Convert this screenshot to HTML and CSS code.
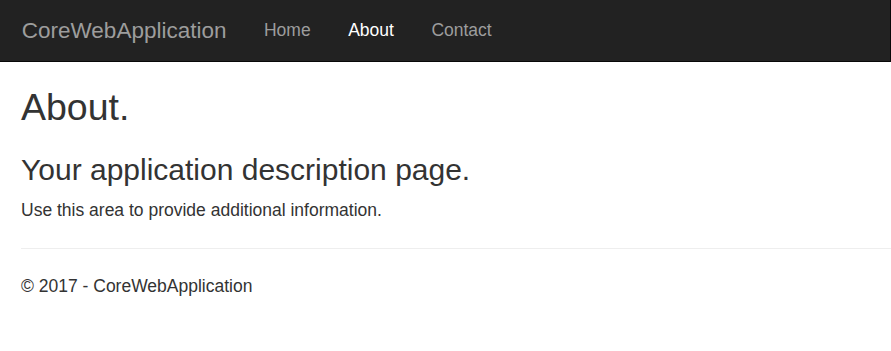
FILE: index.html
```html
<!DOCTYPE html>
<html lang="en">
<head>
<meta charset="utf-8">
<title>About - CoreWebApplication</title>
<link rel="stylesheet" href="styles.css">
</head>
<body>
<nav class="navbar">
  <a class="brand" href="#">CoreWebApplication</a>
  <ul class="nav">
    <li><a href="#">Home</a></li>
    <li><a class="active" href="#">About</a></li>
    <li><a href="#">Contact</a></li>
  </ul>
</nav>
<main class="content">
  <h2 class="title">About.</h2>
  <h3 class="subtitle">Your application description page.</h3>
  <p class="text">Use this area to provide additional information.</p>
  <hr class="rule">
  <footer class="footer">
    <p class="text">&copy; 2017 - CoreWebApplication</p>
  </footer>
</main>
</body>
</html>
```
FILE: styles.css
```css
* { box-sizing: border-box; }
html, body { margin: 0; padding: 0; }
body {
  font-family: "Liberation Sans", Arial, Helvetica, sans-serif;
  font-size: 17.5px;
  line-height: 25px;
  color: #333;
  background: #fff;
}
.navbar {
  display: flex;
  align-items: flex-start;
  height: 62px;
  background: #222;
  border-bottom: 1px solid #080808;
  border-right: 1px solid #080808;
  padding-left: 3px;
}
.brand {
  font-size: 22.5px;
  line-height: 25px;
  padding: 17.5px 18.75px;
  color: #9d9d9d;
  text-decoration: none;
}
.nav {
  display: flex;
  list-style: none;
  margin: 0;
  padding: 0;
}
.nav a {
  display: block;
  padding: 17.5px 18.75px;
  line-height: 25px;
  color: #9d9d9d;
  text-decoration: none;
}
.nav a.active { color: #fff; }
.content {
  padding: 0 0 25px 21px;
}
.title {
  font-size: 37.5px;
  font-weight: 500;
  line-height: 1.1;
  margin: 25px 0 12.5px;
}
.subtitle {
  font-size: 30px;
  font-weight: 500;
  line-height: 1.1;
  margin: 25px 0 11.5px;
}
.text { margin: 0 0 12.5px; }
.rule {
  border: 0;
  border-top: 1px solid #eee;
  margin: 25px 0;
  height: 0;
}
.footer .text { margin: 0; }
```
